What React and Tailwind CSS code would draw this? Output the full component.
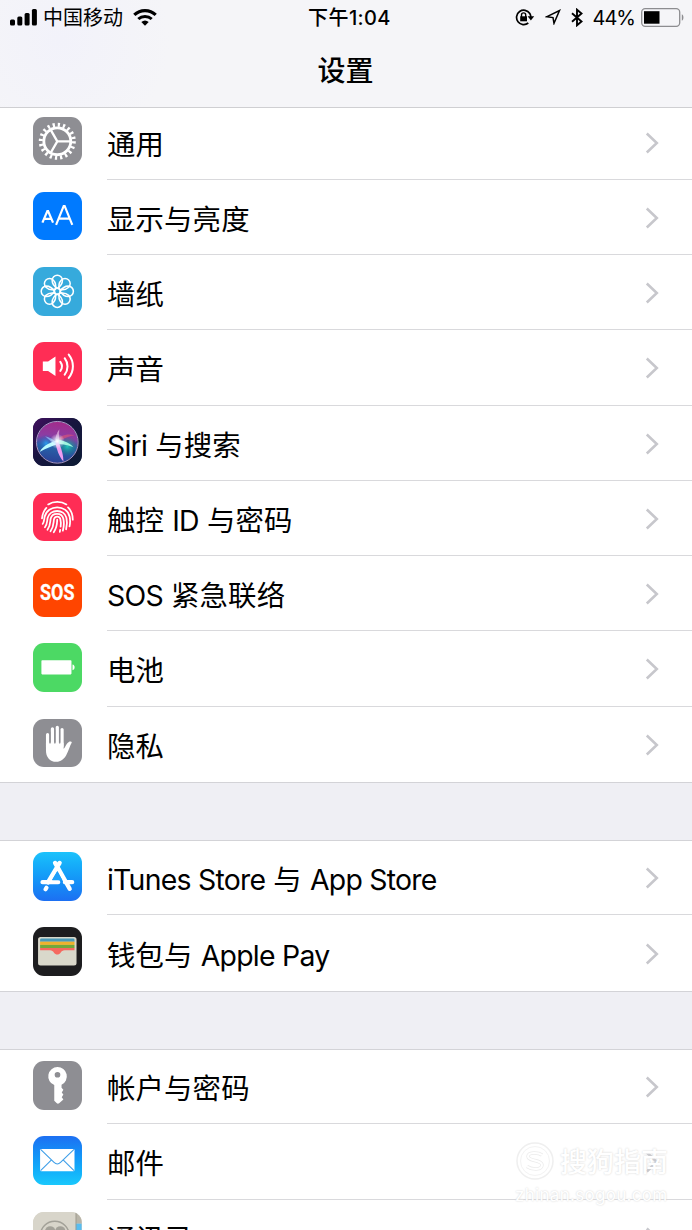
import React from 'react';

const GearIcon = () => (
    <svg viewBox="0 0 48 48" className="w-full h-full" fill="none" stroke="#fff">
        <circle cx="24" cy="24" r="13.3" strokeWidth="2.8" />
        <circle cx="24" cy="24" r="16.3" strokeWidth="4" strokeDasharray="2.2 2.92" />
        <path d="M24 24h13M24 24l-6.5-11.3M24 24l-6.5 11.3" strokeWidth="2.3" />
    </svg>
);

const DisplayIcon = () => (
    <svg viewBox="0 0 48 48" className="w-full h-full" fill="none" stroke="#fff">
        <path d="M9.3 30.3L14.2 18.8h.7L19.8 30.3M11 26.5h7" strokeWidth="2.2" />
        <path d="M22.8 32.5L30.3 14h1L38.8 32.5M25.4 26.3h10.8" strokeWidth="2.1" />
    </svg>
);

const WallpaperIcon = () => (
    <svg viewBox="0 0 48 48" className="w-full h-full" fill="none" stroke="#fff" strokeWidth="1.5">
        {[0, 45, 90, 135, 180, 225, 270, 315].map((a) => (
            <g key={a} transform={`rotate(${a} 24 24)`}>
                <path d="M24 21.2C20.500 19 18.900 15.800 18.900 13.200a5.100 5.100 0 0 1 10.200 0C29.100 15.800 27.500 19 24 21.200z" />
            </g>
        ))}
        <circle cx="24" cy="24" r="2.9" />
    </svg>
);

const SoundIcon = () => (
    <svg viewBox="0 0 48 48" className="w-full h-full" fill="none" stroke="#fff" strokeWidth="2" strokeLinecap="round">
        <path d="M9.7 19.3h5.2l7.3-5v19.4l-7.3-5H9.7z" fill="#fff" stroke="none" />
        <path d="M27 19.6c2 2.7 2 6.3 0 9M31.3 16c3.7 4.8 3.7 11.4 0 16.2M35.3 12.5c5.5 7 5.5 16 0 23" />
    </svg>
);

const SiriIcon = () => (
    <svg viewBox="0 0 48 48" className="w-full h-full" fill="none">
        <defs>
            <linearGradient id="siriBg" x1="0" y1="0" x2="1" y2="1">
                <stop offset="0" stopColor="#42105f" />
                <stop offset=".45" stopColor="#17153f" />
                <stop offset="1" stopColor="#0b1c33" />
            </linearGradient>
            <linearGradient id="siriOrb" x1=".5" y1="0" x2=".4" y2="1">
                <stop offset="0" stopColor="#a32b8a" />
                <stop offset=".38" stopColor="#8a3ea5" />
                <stop offset=".6" stopColor="#2864a8" />
                <stop offset="1" stopColor="#2b3f96" />
            </linearGradient>
            <radialGradient id="siriTeal">
                <stop offset="0" stopColor="#1fd0bb" stopOpacity=".9" />
                <stop offset="1" stopColor="#12806f" stopOpacity="0" />
            </radialGradient>
            <radialGradient id="siriBlue">
                <stop offset="0" stopColor="#2ba4f5" stopOpacity=".9" />
                <stop offset="1" stopColor="#1a4ba8" stopOpacity="0" />
            </radialGradient>
            <radialGradient id="siriGlow">
                <stop offset="0" stopColor="#fff" />
                <stop offset=".35" stopColor="#e8f4ff" stopOpacity=".7" />
                <stop offset="1" stopColor="#fff" stopOpacity="0" />
            </radialGradient>
        </defs>
        <rect width="48" height="48" fill="url(#siriBg)" />
        <circle cx="24" cy="24" r="20.3" fill="url(#siriOrb)" />
        <circle cx="34" cy="28" r="10" fill="url(#siriTeal)" />
        <circle cx="13" cy="25" r="9" fill="url(#siriBlue)" />
        <path d="M22 23C26 18 33 15 41 17c-6 1-12 4-18 7z" fill="#d0507e" opacity=".75" />
        <path d="M23 21c5 1 12 2 17 8-7-3-13-3-18-4z" fill="#9ff5df" />
        <path d="M25 22C19 23 10 27 6.500 33.500c6-3 12-6 19-8z" fill="#b8fbff" />
        <path d="M22 24c1.500 7 3.500 14 8 19 0-6-1.500-12-5-20z" fill="#ee9df0" />
        <path d="M22 24c0-5 1-9 4-13-.3 5-.5 8 0 13z" fill="#f3c9ee" opacity=".6" />
        <path d="M23 24c-3-3-7-5-11-6 3 3 7 6 11 8z" fill="#98c8ff" opacity=".7" />
        <circle cx="24" cy="23" r="7.5" fill="url(#siriGlow)" />
        <circle cx="24" cy="24" r="20.6" stroke="#b8a6d2" strokeWidth=".9" />
    </svg>
);

const TouchIdIcon = () => (
    <svg viewBox="0 0 48 48" className="w-full h-full" fill="none" stroke="#fff" strokeWidth="1.75" strokeLinecap="round">
        <path d="M15 11.3c5.2-3.3 12.8-3.3 18 0" />
        <path d="M8.9 25c.5-4.500 1.800-7.600 4.300-10.200M34.600 14.300c3.200 3 4.700 7.200 4.700 12" />
        <path d="M9.600 30.500c1.500-2.500 1.300-4.300 1.900-7 2.800-12.400 22-12.700 24.700 0 .7 3.300.5 6.800-.1 9.500" />
        <path d="M11.800 33.800c2.600-3.300 1.900-6.100 2.700-9.300 2.200-8.900 16.500-9 18.500 0 .9 3.600.6 7.500-.3 11.300" />
        <path d="M14.300 36.300c3.300-4.300 2.400-8 3.200-11.200 1.600-5.900 10.800-5.900 12.400 0 1 3.700.6 8.200-.4 12.100" />
        <path d="M17.300 37.800c3.800-5 2.700-9.300 3.500-12.100.9-3.100 5.400-3.100 6.200 0 .7 2.800.6 5.200.3 7.600M26.800 36.500l-.3 2" />
        <path d="M20.500 38.800c3.400-5 3.300-8.500 3.400-12.400" />
    </svg>
);

const SosIcon = () => (
    <svg viewBox="0 0 48 48" className="w-full h-full">
        <text
            x="24"
            y="31.8"
            textAnchor="middle"
            textLength="34"
            lengthAdjust="spacingAndGlyphs"
            fill="#fff"
            stroke="#fff"
            strokeWidth=".3"
            className="font-['Roboto'] font-bold text-[22px]"
        >
            SOS
        </text>
    </svg>
);

const BatteryIcon = () => (
    <svg viewBox="0 0 48 48" className="w-full h-full" fill="#fff">
        <rect x="8.3" y="17" width="29.7" height="14" rx=".8" />
        <path d="M39 21.2c2.800.3 2.800 5.300 0 5.600z" />
    </svg>
);

const HandIcon = () => (
    <svg viewBox="0 0 48 48" className="w-full h-full" fill="none" stroke="#fff" strokeLinecap="round">
        <path d="M14.400 15.500V28M19.200 9.700V26M24 8.200V26M28.700 10.400V27" strokeWidth="3.200" />
        <path
            d="M12.800 23.500h17.400v5.800c1.800-1.200 2.500-5.300 5.200-6.700 1.300-.6 2.900-.2 2.900.7-2 3.100-3 8.400-5.500 12.500-2.300 3.900-5.500 6.500-9.600 6.500-6.900 0-10.400-4.900-10.400-11.500z"
            fill="#fff"
            stroke="none"
        />
        <path d="M16.800 13v11M21.600 11v13M26.400 11v13" stroke="#8e8e93" strokeWidth=".9" />
    </svg>
);

const AppStoreIcon = () => (
    <svg viewBox="0 0 48 48" className="w-full h-full" fill="none" stroke="#fff" strokeLinecap="round">
        <path d="M26.3 10.800L14.800 30M21.800 10.800L36.200 36.300" strokeWidth="4.300" />
        <path d="M9.400 29.800h15.500M31.500 29.800h7.200" strokeWidth="4.200" />
        <path d="M13.300 35.300l-.9 1.500" strokeWidth="4.200" />
        <path d="M19 27.800L24.200 18.700l4.800 9.100z" fill="#1ea0fb" stroke="none" />
    </svg>
);

const WalletIcon = () => (
    <svg viewBox="0 0 48 48" className="w-full h-full">
        <rect x="5" y="10" width="38" height="28" rx="2.500" fill="#d9d8cb" />
        <path d="M7 14.500v-1.800q0-1.300 1.400-1.300h31.200q1.400 0 1.400 1.300v1.800z" fill="#4a9bb9" />
        <rect x="7" y="14.500" width="34" height="3.200" fill="#efb22d" />
        <rect x="7" y="17.700" width="34" height="3.100" fill="#72a83b" />
        <path d="M7 20.800h34v2.200H31.200c-1.900 0-2.900 1-3.800 2.200-1.900 2.700-4.900 2.700-6.800 0-.9-1.200-1.900-2.200-3.800-2.200H7z" fill="#f5695f" />
    </svg>
);

const KeyIcon = () => (
    <svg viewBox="0 0 48 48" className="w-full h-full" fill="#fff">
        <path
            fillRule="evenodd"
            d="M24.200 6a9.200 9.200 0 0 1 4 17.500v3l1.800 2-1.600 2.500 1.600 2.200-1.600 2.500 1.600 2.300L25.800 41.700q-1.300.9-2.500-.2L21 39.200V23.800A9.200 9.200 0 0 1 24.200 6zm0 4.800a2.800 2.800 0 1 0 0 5.600 2.800 2.800 0 0 0 0-5.600z"
        />
    </svg>
);

const MailIcon = () => (
    <svg viewBox="0 0 48 48" className="w-full h-full" fill="none">
        <rect x="7" y="12.800" width="34" height="22" rx="1.200" fill="#fff" />
        <path
            d="M7.500 13.300l13.300 12.800c2.300 2.200 4.100 2.200 6.400 0l13.300-12.800M7.500 34.300l10.500-10.400M40.500 34.300L30 23.900"
            stroke="#3f9fe8"
            strokeWidth="1.100"
        />
    </svg>
);

const ContactsIcon = () => (
    <svg viewBox="0 0 48 48" className="w-full h-full" fill="none">
        <rect width="48" height="48" fill="#d8d5ca" />
        <rect x="42.200" width="5.800" height="11.500" fill="#b9b5a8" />
        <rect x="42.200" y="11.500" width="5.800" height="13" fill="#58bdf0" />
        <rect x="42.200" y="24.500" width="5.800" height="24" fill="#f0a33b" />
        <path d="M42.500 0v48" stroke="#9a978c" strokeWidth=".8" />
        <circle cx="21.500" cy="23.500" r="14.300" stroke="#a3a198" strokeWidth="1.500" />
        <ellipse cx="17" cy="18.500" rx="5" ry="4.500" fill="#a3a198" />
        <ellipse cx="27" cy="18.500" rx="5" ry="4.500" fill="#a3a198" />
    </svg>
);

const groups = [
    [
        { label: '通用', icon: GearIcon, bg: 'bg-[#8e8e93]' },
        { label: '显示与亮度', icon: DisplayIcon, bg: 'bg-[#007aff]' },
        { label: '墙纸', icon: WallpaperIcon, bg: 'bg-[#36aadc]' },
        { label: '声音', icon: SoundIcon, bg: 'bg-[#ff2d55]' },
        { label: 'Siri 与搜索', icon: SiriIcon, bg: 'bg-[#17153f]' },
        { label: '触控 ID 与密码', icon: TouchIdIcon, bg: 'bg-[#ff2d55]' },
        { label: 'SOS 紧急联络', icon: SosIcon, bg: 'bg-[#ff4500]' },
        { label: '电池', icon: BatteryIcon, bg: 'bg-[#4cd964]' },
        { label: '隐私', icon: HandIcon, bg: 'bg-[#8e8e93]' },
    ],
    [
        { label: 'iTunes Store 与 App Store', icon: AppStoreIcon, bg: 'bg-linear-to-b from-[#1cc2fb] to-[#1d6ff2]' },
        { label: '钱包与 Apple Pay', icon: WalletIcon, bg: 'bg-[#1d1d1f]' },
    ],
    [
        { label: '帐户与密码', icon: KeyIcon, bg: 'bg-[#8e8e93]' },
        { label: '邮件', icon: MailIcon, bg: 'bg-linear-to-b from-[#1d6ff2] to-[#1ac8fc]' },
        { label: '通讯录', icon: ContactsIcon, bg: 'bg-[#d8d5ca]' },
    ],
];

const StatusBar = () => (
    <div className="grid grid-cols-[1fr_auto_1fr] items-center h-[34px] pl-[10px] pr-[8px] text-[20px] leading-none">
        <div className="flex items-center">
            <svg width="27" height="17" viewBox="0 0 27 17">
                <rect x="0" y="10.5" width="5" height="6" rx="1.5" />
                <rect x="7.3" y="7.5" width="5" height="9" rx="1.5" />
                <rect x="14.6" y="4" width="5" height="12.5" rx="1.5" />
                <rect x="21.9" y="0" width="5" height="16.5" rx="1.5" />
            </svg>
            <span className="ml-[6px] mt-[2px]">中国移动</span>
            <svg width="24" height="17" viewBox="0 0 24 17" fill="none" stroke="#000" className="ml-[10px]">
                <path d="M1.3 5.9C7.2.2 16.8.2 22.7 5.9" strokeWidth="3.2" />
                <path d="M5.3 10C9 6.5 15 6.5 18.7 10" strokeWidth="3" />
                <path d="M12 16.7l-3.7-3.7q3.7-3 7.4 0z" fill="#000" stroke="none" />
            </svg>
        </div>
        <span className="ml-[5px] mt-[2px] font-medium tracking-[0.4px]">下午1:04</span>
        <div className="flex items-center justify-end">
            <svg width="20" height="17" viewBox="0 0 20 17" fill="none" stroke="#000" strokeWidth="1.7">
                <path d="M14.8 4.500A7.200 7.200 0 1 0 13.300 14M15.800 8.500a7.200 7.200 0 0 0-1-4" />
                <path d="M12.600 7.300h6.600l-3.300 4.200z" fill="#000" stroke="none" />
                <rect x="5.200" y="7.300" width="6.800" height="5" fill="#000" stroke="none" />
                <path d="M6.500 8V6a2.100 2.100 0 0 1 4.200 0v2" strokeWidth="1.400" />
            </svg>
            <svg width="16" height="16" viewBox="0 0 16 16" fill="none" stroke="#000" strokeWidth="1.500" className="ml-[10px]">
                <path d="M1.500 7.800L14.500 1.500 9 14.300 8 8.600z" />
            </svg>
            <svg width="12" height="19" viewBox="0 0 12 19" fill="none" stroke="#000" strokeWidth="1.900" className="ml-[10px]">
                <path d="M1 5.300l9.500 8.200L6 17.300v-15.600l4.500 3.800L1 13.700" />
            </svg>
            <span className="ml-[10px] mt-[2px] tracking-[-1px]">44%</span>
            <svg width="43" height="19" viewBox="0 0 43 19" fill="none" className="ml-[6px]">
                <rect x=".7" y=".7" width="38" height="17.600" rx="3.500" stroke="#8d8d90" strokeWidth="1.300" />
                <rect x="3" y="3.200" width="15.500" height="12.500" fill="#000" />
                <path d="M40.800 6.300c2.200.8 2.200 5.600 0 6.400z" fill="#8d8d90" />
            </svg>
        </div>
    </div>
);

// Latin runs get slightly tighter tracking than the Chinese ones
const Label = ({ text }) => (
    <span className="whitespace-pre text-[28.4px] leading-none">
        {text.split(/([A-Za-z]+(?: [A-Za-z]+)*)/).map((part, i) => (
            <span key={i} className={i % 2 ? 'tracking-[-0.75px]' : 'tracking-[0.15px]'}>{part}</span>
        ))}
    </span>
);

const Row = ({ label, icon: Icon, bg, last }) => (
    <div className="flex h-[75.25px] pl-[33.4px]">
        <div className={`mt-[12px] size-[48.6px] shrink-0 rounded-[11px] overflow-hidden ${bg}`}>
            <Icon />
        </div>
        <div className={`ml-[25px] flex flex-1 items-center justify-between pr-[33px] ${last ? '' : 'border-b border-[#d9d9dc]'}`}>
            <div className="pt-[8px]"><Label text={label} /></div>
            <svg width="14" height="22" viewBox="0 0 14 22" fill="none" stroke="#c7c7cc" strokeWidth="2.6" className="mt-[2px]">
                <path d="M1.8 1.5L11.8 11 1.8 20.5" />
            </svg>
        </div>
    </div>
);

const Watermark = () => (
    <div className="absolute left-[515px] top-[1139px] w-[156px] text-white [text-shadow:0_0_2px_#cfcfcf]">
        <div className="flex items-center gap-[5px]">
            <svg width="40" height="44" viewBox="0 0 40 44" fill="none">
                <circle cx="20" cy="22" r="18" stroke="#efefef" strokeWidth="1.500" />
                <circle cx="20" cy="22" r="14.500" stroke="#f3f3f3" strokeWidth="1" />
                <path d="M27 16c-4-3-14-3-14 1.500 0 5 14 3 14 8.500 0 5-10 5-15 1.500" stroke="#ececec" strokeWidth="3.500" />
                <path d="M27 16c-4-3-14-3-14 1.500 0 5 14 3 14 8.500 0 5-10 5-15 1.500" stroke="#fff" strokeWidth="2" />
            </svg>
            <span className="mt-[3px] text-[27px] leading-none font-medium whitespace-nowrap">搜狗指南</span>
        </div>
        <div className="text-[17px] leading-none tracking-[0.3px] mt-[4px]">zhinan.sogou.com</div>
    </div>
);

const App = () => {
    return (
        <div className="relative w-[692px] h-[1230px] overflow-hidden bg-[#efeff4] text-black font-['Inter','Noto_Sans_CJK_SC',sans-serif]">
            <header className="relative z-10 h-[108px] border-b border-[#cfcfd2] bg-[#f5f5f8] bg-[radial-gradient(circle_at_60px_40px,#f2f2fa_0,#f5f5f8_110px)]">
                <StatusBar />
                <h1 className="mt-[23px] pr-px text-center text-[28px] leading-none font-medium">设置</h1>
            </header>
            <main className="-mt-[3.5px] flex flex-col gap-[58.4px]">
                {groups.map((rows, g) => (
                    <section key={g} className="bg-white shadow-[0_1px_0_#d3d3d7,inset_0_1px_0_#d3d3d7]">
                        {rows.map((row, i) => (
                            <Row key={row.label} {...row} last={i === rows.length - 1} />
                        ))}
                    </section>
                ))}
            </main>
            <Watermark />
        </div>
    );
};

export default App;
